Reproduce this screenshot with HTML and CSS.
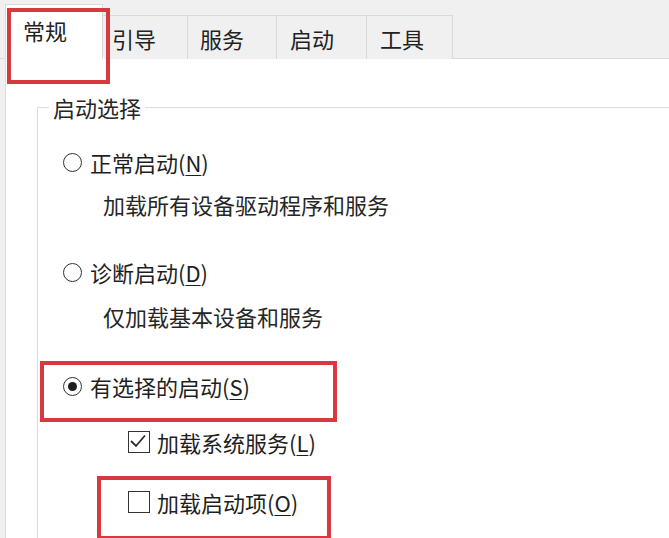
FILE: index.html
```html
<!DOCTYPE html>
<html lang="zh-CN">
<head>
<meta charset="utf-8">
<title>系统配置</title>
<link rel="stylesheet" href="styles.css">
</head>
<body>
<div class="dialog">
  <div class="tabstrip">
    <div class="tab tab-active mark-tab">常规</div>
    <div class="tab tab-w85">引导</div>
    <div class="tab tab-w89">服务</div>
    <div class="tab tab-w90">启动</div>
    <div class="tab tab-w86">工具</div>
  </div>
  <div class="panel">
    <fieldset class="group">
      <legend class="group-title">启动选择</legend>

      <div class="row row-r1">
        <span class="radio"></span>
        <span class="label">正常启动(<u>N</u>)</span>
      </div>
      <div class="row desc desc-1">加载所有设备驱动程序和服务</div>

      <div class="row row-r2">
        <span class="radio"></span>
        <span class="label">诊断启动(<u>D</u>)</span>
      </div>
      <div class="row desc desc-2">仅加载基本设备和服务</div>

      <div class="row row-r3 mark-r3">
        <span class="radio radio-on"></span>
        <span class="label">有选择的启动(<u>S</u>)</span>
      </div>

      <div class="row check-row cb-1">
        <span class="checkbox">
          <svg class="tick" viewBox="0 0 22 22" width="22" height="22"><polyline points="4,11 9,16 18,5.5" fill="none" stroke="#2b2b2b" stroke-width="1.8"/></svg>
        </span>
        <span class="label">加载系统服务(<u>L</u>)</span>
      </div>

      <div class="row check-row cb-2 mark-cb2">
        <span class="checkbox"></span>
        <span class="label">加载启动项(<u>O</u>)</span>
      </div>
    </fieldset>
  </div>
</div>
</body>
</html>
```

FILE: styles.css
```css
* { box-sizing: border-box; }

html, body {
  margin: 0;
  padding: 0;
}

body {
  width: 669px;
  height: 538px;
  overflow: hidden;
  background: #f0f0f0;
  font-family: "Noto Sans CJK SC", "Noto Sans", sans-serif;
  font-size: 22px;
  color: #1f1f1f;
}

.dialog {
  width: 669px;
  height: 538px;
  display: flex;
  flex-direction: column;
  overflow: hidden;
}

/* ---------- tabs ---------- */
.tabstrip {
  position: relative;
  z-index: 2;
  height: 59px;
  flex: none;
  display: flex;
  align-items: flex-end;
  padding-left: 5px;
  border-bottom: 1px solid #d9d9d9;
  background: #f0f0f0;
}

.tab {
  height: 44px;
  margin-bottom: -1px;
  width: 88px;
  padding-left: 10px;
  display: flex;
  align-items: center;
  border-top: 1px solid #d9d9d9;
  border-right: 1px solid #d9d9d9;
  background: #f0f0f0;
  line-height: 1;
  color: #222;
}

.tab-w85 { width: 85px; padding-left: 9px; }
.tab-w89 { width: 89px; padding-left: 12px; }
.tab-w90 { width: 90px; padding-left: 13px; }
.tab-w86 { width: 86px; padding-left: 13px; }

.tab-active {
  position: relative;
  width: 98px;
  height: 55px;
  padding-left: 17px;
  padding-bottom: 3px;
  background: #ffffff;
  border-left: 1px solid #d9d9d9;
  border-bottom: 1px solid #ffffff;
}

/* ---------- annotation boxes ---------- */
.mark-tab::after,
.mark-r3::after,
.mark-cb2::after {
  content: "";
  position: absolute;
  border: 4px solid #d7393f;
  pointer-events: none;
}

.mark-tab::after {
  left: 1px;
  top: 3px;
  width: 95px;
  height: 68px;
}

.mark-r3::after {
  left: -23px;
  top: -10px;
  width: 289px;
  height: 53px;
}

.mark-cb2::after {
  left: 34px;
  top: -11px;
  width: 226px;
  height: 56px;
}

/* ---------- panel ---------- */
.panel {
  flex: 1;
  min-height: 0;
  overflow: hidden;
  background: #ffffff;
  margin-left: 5px;
  border-left: 1px solid #dcdcdc;
  padding: 35px 0 0 31px;
}

.group {
  margin: 0 -2px 0 0;
  padding: 0 0 30px 25px;
  border: 1px solid #dcdcdc;
  min-width: 0;
}

.group-title {
  margin-left: -14px;
  padding: 0 4px;
  line-height: 26px;
  color: #262626;
}

.row {
  position: relative;
  height: 30px;
  display: flex;
  align-items: center;
  line-height: 30px;
  white-space: nowrap;
}

.label u {
  text-decoration-thickness: 1px;
  text-underline-offset: 3px;
}

.row-r1 { margin-top: 27px; }
.desc-1 { margin-top: 12px; }
.row-r2 { margin-top: 38px; }
.desc-2 { margin-top: 14px; }
.row-r3 { margin-top: 40px; }
.cb-1   { margin-top: 26px; }
.cb-2   { margin-top: 30px; }

.desc {
  padding-left: 40px;
  color: #262626;
}

.radio {
  width: 19px;
  height: 19px;
  border: 1.6px solid #333333;
  border-radius: 50%;
  background: #ffffff;
  margin-right: 8px;
  flex: none;
  display: flex;
  align-items: center;
  justify-content: center;
}

.radio-on::before {
  content: "";
  width: 9px;
  height: 9px;
  border-radius: 50%;
  background: #1e1e1e;
}

.check-row {
  padding-left: 65px;
}

.checkbox {
  width: 22px;
  height: 22px;
  border: 1.6px solid #333333;
  background: #ffffff;
  margin-right: 7px;
  flex: none;
  position: relative;
}

.tick {
  position: absolute;
  left: -1.6px;
  top: -1.6px;
}
```
